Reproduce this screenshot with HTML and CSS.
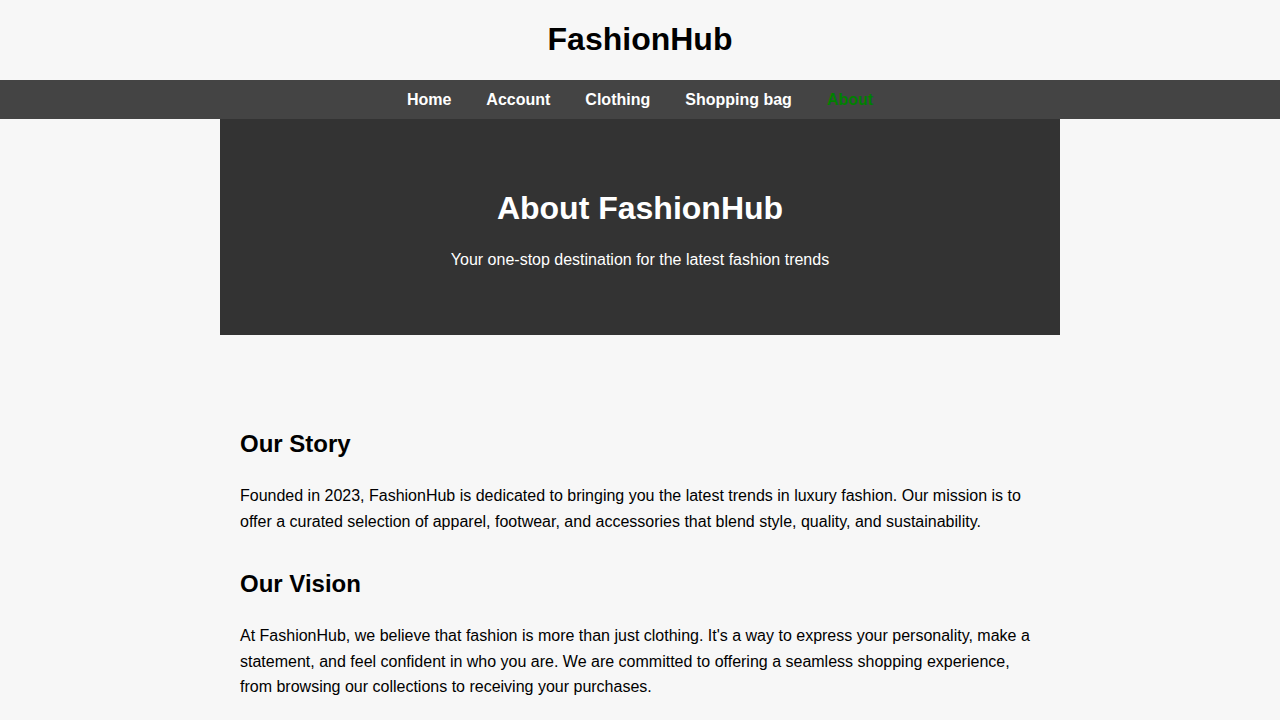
FILE: index.html
```html
<!DOCTYPE html>
<html lang="en">
<head>
<meta charset="utf-8">
<title>About - FashionHub</title>
<link rel="stylesheet" href="styles.css">
</head>
<body>
<header class="site-header">
  <h1 class="brand">FashionHub</h1>
</header>
<nav class="main-nav">
  <a href="#" class="nav-link">Home</a>
  <a href="#" class="nav-link">Account</a>
  <a href="#" class="nav-link">Clothing</a>
  <a href="#" class="nav-link">Shopping bag</a>
  <a href="#" class="nav-link active">About</a>
</nav>
<main class="container">
  <section class="hero">
    <h1 class="hero-title">About FashionHub</h1>
    <p class="hero-sub">Your one-stop destination for the latest fashion trends</p>
  </section>
  <div class="content">
    <div class="block">
      <h2 class="block-title">Our Story</h2>
      <p class="block-text">Founded in 2023, FashionHub is dedicated to bringing you the latest trends in luxury fashion. Our mission is to offer a curated selection of apparel, footwear, and accessories that blend style, quality, and sustainability.</p>
    </div>
    <div class="block">
      <h2 class="block-title">Our Vision</h2>
      <p class="block-text">At FashionHub, we believe that fashion is more than just clothing. It's a way to express your personality, make a statement, and feel confident in who you are. We are committed to offering a seamless shopping experience, from browsing our collections to receiving your purchases.</p>
    </div>
  </div>
</main>
</body>
</html>
```
FILE: styles.css
```css
* { box-sizing: border-box; }
html, body {
  margin: 0;
  padding: 0;
  background: #f7f7f7;
  color: #000;
  font-family: "Liberation Sans", Arial, sans-serif;
  font-size: 16px;
  line-height: 1.6;
}
.site-header {
  padding: 14px 0 15px;
  text-align: center;
}
.brand {
  margin: 0;
  font-size: 32px;
  font-weight: bold;
}
.main-nav {
  background: #444444;
  height: 39px;
  display: flex;
  justify-content: center;
  align-items: center;
  gap: 35px;
}
.nav-link {
  color: #fff;
  text-decoration: none;
  font-weight: bold;
  font-size: 16px;
}
.nav-link.active {
  color: #008000;
}
.container {
  width: 840px;
  margin: 0 auto;
}
.hero {
  background: #333333;
  color: #fff;
  text-align: center;
  padding: 64px 20px 62px;
}
.hero-title {
  margin: 0 0 13px;
  font-size: 32px;
  font-weight: bold;
}
.hero-sub {
  margin: 0;
  font-size: 16px;
}
.content {
  padding: 70px 20px 0;
}
.block {
  margin-bottom: 30px;
}
.block-title {
  margin: 20px 0;
  font-size: 24px;
  font-weight: bold;
}
.block-text {
  margin: 16px 0;
}
```
